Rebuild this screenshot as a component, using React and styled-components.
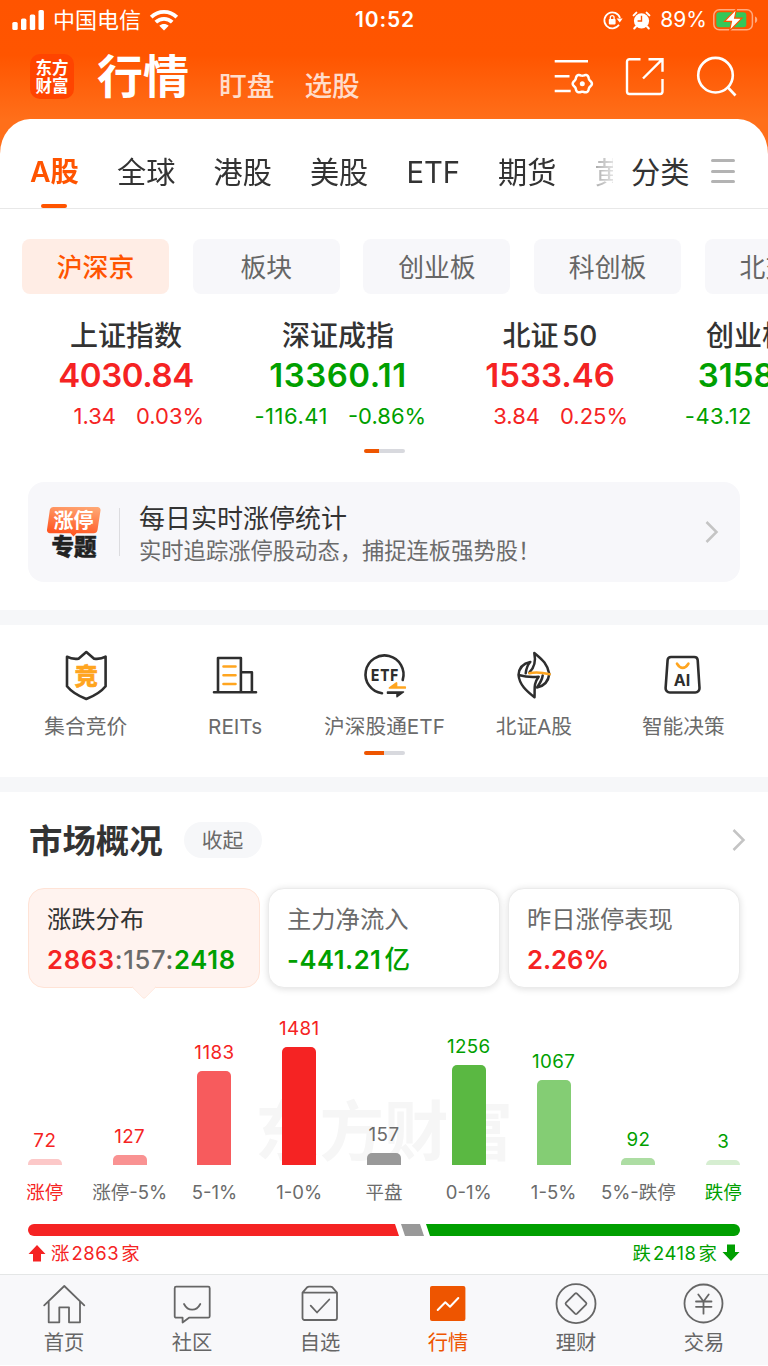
import React, { useState } from 'react'
import styled, { createGlobalStyle } from 'styled-components'

const RED = '#f52323'
const GREEN = '#009f00'
const ORANGE = '#ff5400'
const DARK = '#333333'
const GREY = '#6b6b6b'

const GlobalStyle = createGlobalStyle`
    * { box-sizing: border-box; }
    body {
        margin: 0;
        background: #ffffff;
        color: ${DARK};
        font-family: Inter, "Noto Sans CJK SC", sans-serif;
        overflow: hidden;
    }
    button {
        font: inherit;
        color: inherit;
        border: none;
        background: none;
        padding: 0;
        margin: 0;
    }
    svg { display: block; flex: none; overflow: visible; }
`

const Screen = styled.div`
    width: 768px;
    height: 1366px;
    overflow: hidden;
    display: flex;
    flex-direction: column;
    white-space: nowrap;
`

// header
const Header = styled.header`
    flex: none;
    height: 160px;
    background: linear-gradient(#ff5400 0, #ff5500 55px, #ff6f1a 120px);
    color: #ffffff;
`

const StatusBar = styled.div`
    height: 40px;
    padding: 0 10px 0 12px;
    display: grid;
    grid-template-columns: 1fr auto 1fr;
    align-items: center;
    font-size: 22px;
    line-height: 40px;
`

const StatusSide = styled.div`
    display: flex;
    align-items: center;
    justify-content: ${props => props.$end ? 'flex-end' : 'flex-start'};
    gap: ${props => props.$end ? 9 : 8}px;
`

const BatteryLevel = styled.span`
    font-size: 21px;
    margin-right: -3px;
`

const Clock = styled.div`
    font-weight: 600;
    font-size: 21px;
    letter-spacing: .9px;
`

const TitleBar = styled.div`
    height: 79px;
    padding: 0 30px;
    display: flex;
    align-items: flex-start;
`

const Logo = styled.div`
    width: 44px;
    height: 45px;
    margin-top: 14px;
    padding-top: 5px;
    border-radius: 10px;
    background: #ff4400;
    font-size: 16.5px;
    line-height: 18px;
    font-weight: 700;
    text-align: center;
`

const PageTitle = styled.h1`
    margin: 8px 0 0 23px;
    font-size: 46px;
    line-height: 56px;
    font-weight: 700;
`

const HeaderLink = styled.button`
    margin: 26px 0 0 30px;
    font-size: 27.7px;
    line-height: 40px;
    font-weight: 500;
    color: #ffdccb;
`

const HeaderIcons = styled.div`
    display: flex;
    gap: 30px;
    margin: 16px 0 0 auto;
    svg:last-child { margin-left: -1px; }
`

// white sheet
const Sheet = styled.main`
    flex: 1;
    margin-top: -41px;
    background: #ffffff;
    border-radius: 30px 30px 0 0 / 35px 35px 0 0;
`

const TabBar = styled.nav`
    height: 90px;
    padding: 0 32px 0 30px;
    display: flex;
    align-items: stretch;
    border-bottom: 1px solid #e8e8e8;
`

const TabList = styled.div`
    flex: none;
    width: 583px;
    overflow: hidden;
    display: flex;
    gap: 38.1px;
    mask-image: linear-gradient(to right, #000 95%, rgba(0, 0, 0, .35) 97.5%, rgba(0, 0, 0, .15) 100%);
`

const Tab = styled.button`
    display: flex;
    flex-direction: column;
    align-items: center;
    justify-content: space-between;
    font-size: ${props => props.$active ? 28.3 : 29.2}px;
    font-weight: ${props => props.$active ? 600 : 400};
    color: ${props => props.$active ? ORANGE : DARK};
    line-height: 107px;
    height: 89px;
    &:after {
        content: '';
        width: 26px;
        height: 4px;
        margin-top: -22px;
        border-radius: 2px;
        background: ${props => props.$active ? ORANGE : 'transparent'};
    }
`

const Category = styled.div`
    margin-left: 18px;
    font-size: 29.2px;
    line-height: 107px;
`

const MenuLines = styled.div`
    margin: 40px 0 0 22px;
    width: 24px;
    height: 24px;
    display: flex;
    flex-direction: column;
    justify-content: space-between;
    i {
        height: 3px;
        border-radius: 2px;
        background: #b3b3b3;
    }
`

const Chips = styled.div`
    display: flex;
    gap: 23.7px;
    padding: 30px 0 0 22px;
    overflow: hidden;
`

const Chip = styled.button`
    flex: none;
    width: 147px;
    height: 55px;
    border-radius: 8px;
    font-size: 25.8px;
    line-height: 58px;
    font-weight: ${props => props.$active ? 500 : 400};
    color: ${props => props.$active ? ORANGE : '#666666'};
    background: ${props => props.$active ? '#ffede5' : '#f7f7fa'};
`

const IndexRow = styled.div`
    display: flex;
    height: 155px;
    padding: 22px 0 0 20px;
    overflow: hidden;
`

const IndexCell = styled.div`
    flex: none;
    width: 212px;
    text-align: center;
    color: ${props => props.$up ? RED : GREEN};
`

const IndexName = styled.div`
    font-size: 28px;
    line-height: 40px;
    font-weight: 500;
    color: ${DARK};
    word-spacing: -4px;
`

const IndexValue = styled.div`
    font-size: 33px;
    line-height: 39px;
    font-weight: 600;
    letter-spacing: ${props => props.$spacing || 0}px;
`

const IndexChange = styled.div`
    display: grid;
    grid-template-columns: 1fr 1fr;
    gap: 20px;
    font-size: 22px;
    line-height: 42px;
    span:first-child {
        text-align: right;
        letter-spacing: ${props => props.$up ? 0 : .5}px;
    }
    span:last-child { text-align: left; }
`

const Pager = styled.div`
    width: 41px;
    height: 4px;
    margin: 0 auto;
    border-radius: 2px;
    background: linear-gradient(to right, #ee5500 ${props => props.$fill}, #d8d9de ${props => props.$fill});
`

const Banner = styled.section`
    margin: 29px 28px 28px;
    height: 100px;
    padding: 0 21px 0 18px;
    border-radius: 16px;
    background: #f7f7fa;
    display: flex;
    align-items: center;
`

const BannerRule = styled.div`
    width: 1px;
    height: 48px;
    margin: 0 19px 0 17px;
    background: #dcdcdf;
`

const BannerText = styled.div`
    flex: 1;
    display: flex;
    flex-direction: column;
    padding-top: 3px;
    strong {
        font-size: 26px;
        line-height: 34px;
        font-weight: 400;
    }
    span {
        font-size: 22.3px;
        line-height: 30px;
        color: ${GREY};
    }
`

const Strip = styled.div`
    height: 15px;
    background: #f6f7f9;
`

const Shortcuts = styled.section`
    height: 152px;
    padding: 25px 10px 0 11px;
`

const ShortcutGrid = styled.div`
    display: grid;
    grid-template-columns: repeat(5, 1fr);
    margin-bottom: 9px;
`

const Shortcut = styled.button`
    display: flex;
    flex-direction: column;
    align-items: center;
    font-size: 20.7px;
    line-height: 30px;
    color: ${GREY};
    svg { margin-bottom: 10px; }
`

const Overview = styled.section`
    padding: 0 28px;
`

const SectionHead = styled.div`
    height: 96px;
    display: flex;
    align-items: center;
    h2 {
        margin: 2px 21px 0 1px;
        font-size: 33.4px;
        line-height: 48px;
        font-weight: 700;
    }
    svg { margin: 0 -6px 0 auto; }
`

const Pill = styled.button`
    width: 78px;
    height: 36px;
    border-radius: 18px;
    background: #f6f7f9;
    color: ${GREY};
    font-size: 20.8px;
    line-height: 37px;
`

const Cards = styled.div`
    display: grid;
    grid-template-columns: repeat(3, 1fr);
    gap: 8px;
`

const Card = styled.button`
    position: relative;
    height: 100px;
    padding: 12px 0 0 18px;
    display: flex;
    flex-direction: column;
    text-align: left;
    border-radius: 16px;
    border: 1px solid ${props => props.$active ? '#ffe3d6' : '#ebebeb'};
    background: ${props => props.$active ? '#fff3ef' : '#ffffff'};
    box-shadow: ${props => props.$active ? 'none' : '0 1px 7px rgba(0, 0, 0, .13)'};
    &:after {
        content: '';
        display: ${props => props.$active ? 'block' : 'none'};
        position: absolute;
        left: 50%;
        bottom: -9px;
        width: 17px;
        height: 17px;
        background: #fff3ef;
        border: 1px solid #ffe9df;
        border-width: 0 1px 1px 0;
        border-radius: 3px;
        transform: translateX(-50%) rotate(45deg);
    }
`

const CardTitle = styled.div`
    font-size: 24.3px;
    line-height: 36px;
    color: ${props => props.$active ? DARK : GREY};
`

const CardValue = styled.div`
    margin-top: 2px;
    font-size: 25.6px;
    line-height: 42px;
    font-weight: 600;
    letter-spacing: ${props => props.$spacing || 0}px;
    color: ${props => props.$color};
`

const Part = styled.span`
    color: ${props => props.$color};
    font-weight: ${props => props.$weight || 600};
`

const Unit = styled.span`
    margin-left: 3px;
    font-weight: 500;
`

const Chart = styled.div`
    position: relative;
    height: 219px;
    margin: 0 -26px;
    display: grid;
    grid-template-columns: repeat(9, 84.8px);
    justify-content: center;
    align-items: end;
`

const Watermark = styled.div`
    position: absolute;
    left: 253px;
    top: 99px;
    font-size: 64.5px;
    line-height: 90px;
    font-weight: 700;
    color: #f6f6f6;
`

const BarColumn = styled.div`
    position: relative;
    display: flex;
    flex-direction: column;
    align-items: center;
`

const BarValue = styled.div`
    font-size: 18.8px;
    line-height: 24px;
    letter-spacing: .4px;
    margin-bottom: 6px;
    color: ${props => props.$color};
`

const Bar = styled.div`
    width: 34px;
    border-radius: 5px 5px 0 0;
    background: ${props => props.$color};
`

const BarLabel = styled.div`
    margin-top: 13px;
    height: 29px;
    font-size: 18.5px;
    line-height: 29px;
    color: ${props => props.$color || GREY};
`

const RatioBar = styled.div`
    display: grid;
    grid-template-columns: 371px 23px 1fr;
    gap: 2px;
    height: 12px;
    margin-top: 17px;
`

const RatioUp = styled.div`
    background: ${RED};
    border-radius: 6px 0 0 6px;
    clip-path: polygon(0 0, calc(100% - 4px) 0, 100% 100%, 0 100%);
`

const RatioFlat = styled.div`
    background: #999999;
    clip-path: polygon(0 0, calc(100% - 4px) 0, 100% 100%, 4px 100%);
`

const RatioDown = styled.div`
    background: ${GREEN};
    border-radius: 0 6px 6px 0;
    clip-path: polygon(0 0, 100% 0, 100% 100%, 4px 100%);
`

const RatioLegend = styled.div`
    display: flex;
    justify-content: space-between;
    font-size: 18.4px;
    line-height: 34px;
`

const LegendItem = styled.div`
    display: flex;
    align-items: center;
    gap: 5px;
    color: ${props => props.$color};
    b {
        font-weight: 400;
        margin: 0 2px;
        letter-spacing: .6px;
    }
`

const BottomNav = styled.nav`
    flex: none;
    height: 91px;
    margin-bottom: 1px;
    border-top: 1px solid #e4e6e6;
    background: #f8f8fa;
    display: grid;
    grid-template-columns: repeat(6, 1fr);
`

const NavItem = styled.button`
    display: flex;
    flex-direction: column;
    align-items: center;
    padding-top: 7px;
    font-size: 20.3px;
    line-height: 30px;
    color: ${props => props.$active ? '#ee5500' : '#666666'};
    svg { margin-bottom: 2px; }
`

// icons
const SignalIcon = () => (
    <svg width="33" height="20" viewBox="0 0 33 20" fill="#fff">
        <rect x="0.3" y="12" width="5.4" height="8" rx="1.6" />
        <rect x="9" y="8.6" width="5.4" height="11.4" rx="1.6" />
        <rect x="17.8" y="4.4" width="5.4" height="15.6" rx="1.6" />
        <rect x="26.5" y="0" width="5.4" height="20" rx="1.6" />
    </svg>
)

const WifiIcon = () => (
    <svg width="28" height="21" viewBox="-1 0 28 21" fill="none" stroke="#fff" strokeWidth="3.8">
        <path d="M1.2 7.2C8.4 .2 19.6 .2 26.8 7.2" />
        <path d="M5.8 12.2c4.7-4.4 11.7-4.4 16.4 0" />
        <path d="M9.3 15.8c2.7-2.5 6.7-2.5 9.4 0L14 20.6z" fill="#fff" stroke="none" />
    </svg>
)

const RotationLockIcon = () => (
    <svg width="20" height="20" viewBox="0 0 20 20" fill="none" stroke="#fff" strokeWidth="1.7">
        <path d="M16 14.8A8 8 0 1 1 17 8" />
        <path d="M13.6 8.4h6l-2.8 4z" fill="#fff" stroke="none" />
        <rect x="5.8" y="9" width="6.8" height="5.4" rx=".8" fill="#fff" stroke="none" />
        <path d="M7.3 9.4V7.6a1.9 1.9 0 0 1 3.8 0v1.8" strokeWidth="1.3" />
    </svg>
)

const AlarmIcon = () => (
    <svg width="19" height="19" viewBox="0 0 19 19">
        <circle cx="9.5" cy="9.8" r="7.6" fill="#fff" />
        <path d="M1.6 4.4L4.4 1.6M17.4 4.4L14.6 1.6M4 15.5l-1.8 2M15 15.5l1.8 2" stroke="#fff" strokeWidth="2" fill="none" strokeLinecap="round" />
        <path d="M9.5 4.8v5.2H5.6" stroke={ORANGE} strokeWidth="1.4" fill="none" />
    </svg>
)

const BatteryIcon = () => (
    <svg width="45" height="22" viewBox="0 0 45 22">
        <rect x=".8" y=".8" width="38.6" height="20" rx="5.5" fill="none" stroke="#ffaa80" strokeWidth="1.5" />
        <path d="M42 7.5c3 1 3 5.6 0 6.6z" fill="#ffaa80" />
        <rect x="3.3" y="3.3" width="30" height="15" rx="3" fill="#34c759" />
        <path d="M23.5-.2L11.5 12.3h7l-2 9.5L29 9.2h-7.4z" fill="#fff" stroke={ORANGE} strokeWidth="1.2" />
    </svg>
)

// six-lobed outline around the settings dot
const gearPath = Array.from({ length: 72 }, (_, i) => {
    const a = i * Math.PI / 36
    const r = 8.8 + 0.8 * Math.cos(a * 6)
    return `${i ? 'L' : 'M'}${(28.3 + r * Math.cos(a)).toFixed(2)} ${(26.7 + r * Math.sin(a)).toFixed(2)}`
}).join('') + 'Z'

const FilterIcon = () => (
    <svg width="42" height="42" viewBox="0 0 42 42" fill="none" stroke="#fff" strokeWidth="2.5">
        <path d="M.7 5.3H34M.7 20.3h14.8M.7 35h16" />
        <path d={gearPath} transform="translate(0 1)" />
        <circle cx="28.3" cy="27.7" r="2.5" fill="#fff" stroke="none" />
    </svg>
)

const ShareIcon = () => (
    <svg width="42" height="42" viewBox="0.5 0 42 42" fill="none" stroke="#fff" strokeWidth="2.4">
        <path d="M15 3.2H4a2.500 2.500 0 0 0-2.500 2.500v29.800A2.500 2.500 0 0 0 4 38h30.500a2.500 2.500 0 0 0 2.500-2.500V23" />
        <path d="M23 3.2h14V15.800M37 3.200L17.500 22.500" />
    </svg>
)

const SearchIcon = () => (
    <svg width="41" height="42" viewBox="0 0 41 42" fill="none" stroke="#fff" strokeWidth="2.6">
        <circle cx="18.5" cy="19.2" r="17.3" />
        <path d="M30.5 31l8 8.5" />
    </svg>
)

const ChevronIcon = () => (
    <svg width="14" height="24" viewBox="0 0 14 24" fill="none" stroke="#c4c4c4" strokeWidth="2.5">
        <path d="M1.5 2l10 10-10 10" />
    </svg>
)

const LimitUpBadge = () => (
    <svg width="56" height="54" viewBox="0 0 56 54">
        <defs>
            <linearGradient id="badge" x1="1" y1="0" x2=".7" y2="1">
                <stop offset="0" stopColor="#ffab78" />
                <stop offset="1" stopColor="#ff5722" />
            </linearGradient>
        </defs>
        <path d="M7.5 2H51.5a3 3 0 0 1 3 3.4L51.5 25a4 4 0 0 1-4 3.2H30.500L27.500 31.500 24.500 28.200H4a3 3 0 0 1-3-3.400L3.800 5A4 4 0 0 1 7.500 2z" fill="url(#badge)" />
        <text x="27.5" y="22.5" fontSize="20" fontWeight="700" fill="#fff" textAnchor="middle">涨停</text>
        <text x="28" y="50" fontSize="22.5" fontWeight="900" fill="#222" stroke="#222" strokeWidth=".5" textAnchor="middle">专题</text>
    </svg>
)

const ShortcutSvg = ({ children }) => (
    <svg width="52" height="52" viewBox="0 0 52 52" fill="none" stroke="#2e2e2e" strokeWidth="2.6" strokeLinejoin="round" strokeLinecap="round">
        {children}
    </svg>
)

const AuctionIcon = () => (
    <ShortcutSvg>
        <path d="M7 6.700c4 2.200 7.500 2.500 11.500 2L26.300 2l7.800 6.700c4 .5 7.500.2 11.500-2v29.500c-4 5-11 9.500-19.300 12.800C18 45.700 11 41.200 7 36.200z" />
        <text x="26.3" y="34.5" fontSize="23.5" fontWeight="900" fill="#ffa51f" stroke="#ffa51f" strokeWidth=".5" textAnchor="middle">竞</text>
    </ShortcutSvg>
)

const ReitsIcon = () => (
    <ShortcutSvg>
        <path d="M5 42.300h42M9 42V8h22.900v34M31.900 22.300h11V42" />
        <path d="M14.500 16.500h12M14.500 25.300h12M14.500 34h12" stroke="#ffa51f" />
    </ShortcutSvg>
)

const EtfIcon = () => (
    <ShortcutSvg>
        <path d="M24 43.3A19 19 0 1 1 44.700 30" />
        <text x="13" y="30.500" fontSize="15.500" fontWeight="800" fill="#2e2e2e" stroke="none" letterSpacing="1" textLength="28" lengthAdjust="spacingAndGlyphs">ETF</text>
        <path d="M31.500 38L38.500 33v4H47.200v1H31.500z" fill="#ffa51f" stroke="#ffa51f" strokeWidth="1.700" />
        <path d="M29.500 42H45.500L39 46.700V43.300H29.500z" fill="#2e2e2e" strokeWidth="1.500" />
    </ShortcutSvg>
)

const BeijingIcon = () => (
    <ShortcutSvg>
        <path d="M21.300 22.700C26 18 28 11 26.300 3c7 6 13 10 15 21-1 8-5 12-12.300 13.500 2.500-3.500 5-7 5.700-12" strokeWidth="2.500" />
        <path d="M17.700 23.300c.5-4.500 1.500-8 4.600-11.300C15 13.500 11 18 10.500 25c1 10 8 16 16 22.300.6-8-1.500-13.300 4.200-20.600-6 .8-13 .3-20.200-1.700" strokeWidth="2.500" />
        <path d="M21.300 23.300c7-1.500 12-1 20.400 1" stroke="#ffa51f" strokeWidth="2.500" />
    </ShortcutSvg>
)

const AiIcon = () => (
    <ShortcutSvg>
        <path d="M14 7h23.200a3.500 3.500 0 0 1 3.500 3.200L42.500 38a4.200 4.200 0 0 1-4.200 4.500H12.800A4.200 4.200 0 0 1 8.600 38l2-27.800A3.500 3.500 0 0 1 14 7z" />
        <path d="M20 13.700c3.500 5.600 7.900 5.600 11.400 0" stroke="#ffa51f" />
        <text x="25" y="36" fontSize="16" fontWeight="700" fill="#2e2e2e" stroke="none" textAnchor="middle">AI</text>
    </ShortcutSvg>
)

const NavSvg = ({ children }) => (
    <svg width="44" height="44" viewBox="0 0 44 44" fill="none" stroke="#666" strokeWidth="1.8" strokeLinejoin="round" strokeLinecap="round">
        {children}
    </svg>
)

const HomeIcon = () => (
    <NavSvg>
        <path d="M2.200 23.300L22.300 4l20 19.300M6.700 19.500v20.800h10.600v-15H27v15h11V19.500" />
    </NavSvg>
)

const CommunityIcon = () => (
    <NavSvg>
        <path d="M6.200 4.700h32a1.500 1.500 0 0 1 1.500 1.500v28a1.500 1.500 0 0 1-1.500 1.500H19L12.600 40.500V35.700H6.200a1.500 1.500 0 0 1-1.500-1.500v-28a1.500 1.500 0 0 1 1.500-1.500z" />
        <path d="M14 22c4 7.600 12.300 7.600 16.300 0" />
    </NavSvg>
)

const WatchlistIcon = () => (
    <NavSvg>
        <path d="M4.500 10.700H39V36a2 2 0 0 1-2 2H6.500a2 2 0 0 1-2-2zL9.300 5.200 11 4.700H32.500l1.700.5L39 10.700" />
        <path d="M12.700 23.700l6.300 6.800 12.300-13" />
    </NavSvg>
)

const MarketIcon = () => (
    <NavSvg>
        <rect x="4" y="4" width="35.4" height="35" rx="2" fill="#ee5500" stroke="none" />
        <path d="M11.700 28l7.600-7.700 4.700 4.400 8.300-8.700" stroke="#fff" strokeWidth="2" />
    </NavSvg>
)

const FinanceIcon = () => (
    <NavSvg>
        <circle cx="22" cy="21.7" r="19.5" />
        <path d="M21 11.700a1.500 1.500 0 0 1 2 0l9 9a1.500 1.500 0 0 1 0 2l-9 9a1.500 1.500 0 0 1-2 0l-9-9a1.500 1.500 0 0 1 0-2z" />
    </NavSvg>
)

const TradeIcon = () => (
    <NavSvg>
        <circle cx="21.5" cy="21.5" r="19" />
        <path d="M16.300 12.500l5.200 7 5.200-7M21.500 19.500V31.700M14 19.500h15.500M14 24.800h15.500" />
    </NavSvg>
)

const tabs = ['A股', '全球', '港股', '美股', 'ETF', '期货', '黄金']
const chips = ['沪深京', '板块', '创业板', '科创板', '北交所']

const indices = [
    { name: '上证指数', value: '4030.84', change: '1.34', percent: '0.03%', up: true, spacing: -.4 },
    { name: '深证成指', value: '13360.11', change: '-116.41', percent: '-0.86%', spacing: .5 },
    { name: '北证 50', value: '1533.46', change: '3.84', percent: '0.25%', up: true },
    { name: '创业板指', value: '3158.98', change: '-43.12', percent: '-1.35%' },
]

const shortcuts = [
    { label: '集合竞价', Icon: AuctionIcon },
    { label: 'REITs', Icon: ReitsIcon },
    { label: '沪深股通ETF', Icon: EtfIcon },
    { label: '北证A股', Icon: BeijingIcon },
    { label: '智能决策', Icon: AiIcon },
]

const distribution = [
    { label: '涨停', count: 72, bar: '#fcc8c8', text: RED, labelColor: RED },
    { label: '涨停-5%', count: 127, bar: '#f99292', text: RED },
    { label: '5-1%', count: 1183, bar: '#f75b5d', text: RED },
    { label: '1-0%', count: 1481, bar: '#f52323', text: RED },
    { label: '平盘', count: 157, bar: '#999999', text: GREY },
    { label: '0-1%', count: 1256, bar: '#5ab842', text: GREEN },
    { label: '1-5%', count: 1067, bar: '#84cd74', text: GREEN },
    { label: '5%-跌停', count: 92, bar: '#addda3', text: GREEN },
    { label: '跌停', count: 3, bar: '#d6eed1', text: GREEN, labelColor: GREEN },
]

const navItems = [
    { label: '首页', Icon: HomeIcon },
    { label: '社区', Icon: CommunityIcon },
    { label: '自选', Icon: WatchlistIcon },
    { label: '行情', Icon: MarketIcon },
    { label: '理财', Icon: FinanceIcon },
    { label: '交易', Icon: TradeIcon },
]

const barHeight = (count) => Math.max(5, count * 118 / 1481)

function Distribution() {
    return (
        <>
            <Chart>
                <Watermark>东方财富</Watermark>
                {distribution.map(item => (
                    <BarColumn key={item.label}>
                        <BarValue $color={item.text}>{item.count}</BarValue>
                        <Bar $color={item.bar} style={{ height: barHeight(item.count) }} />
                        <BarLabel $color={item.labelColor}>{item.label}</BarLabel>
                    </BarColumn>
                ))}
            </Chart>
            <RatioBar>
                <RatioUp />
                <RatioFlat />
                <RatioDown />
            </RatioBar>
            <RatioLegend>
                <LegendItem $color={RED}>
                    <svg width="18" height="18" viewBox="0 0 18 18" fill={RED}><path d="M9 1l8.500 9h-4.500V17.500H5V10H.5z" /></svg>
                    <span>涨<b>2863</b>家</span>
                </LegendItem>
                <LegendItem $color={GREEN}>
                    <span>跌<b>2418</b>家</span>
                    <svg width="18" height="18" viewBox="0 0 18 18" fill={GREEN}><path d="M9 17l8.500-9h-4.500V.5H5V8H.5z" /></svg>
                </LegendItem>
            </RatioLegend>
        </>
    )
}

export default function App() {
    const [ tab, setTab ] = useState('A股')
    const [ chip, setChip ] = useState('沪深京')

    return (
        <Screen>
            <GlobalStyle />
            <Header>
                <StatusBar>
                    <StatusSide>
                        <SignalIcon />
                        <span>中国电信</span>
                        <WifiIcon />
                    </StatusSide>
                    <Clock>10:52</Clock>
                    <StatusSide $end>
                        <RotationLockIcon />
                        <AlarmIcon />
                        <BatteryLevel>89%</BatteryLevel>
                        <BatteryIcon />
                    </StatusSide>
                </StatusBar>
                <TitleBar>
                    <Logo>东方<br />财富</Logo>
                    <PageTitle>行情</PageTitle>
                    <HeaderLink>盯盘</HeaderLink>
                    <HeaderLink>选股</HeaderLink>
                    <HeaderIcons>
                        <FilterIcon />
                        <ShareIcon />
                        <SearchIcon />
                    </HeaderIcons>
                </TitleBar>
            </Header>
            <Sheet>
                <TabBar>
                    <TabList>
                        {tabs.map(name => (
                            <Tab key={name} $active={name === tab} onClick={() => setTab(name)}>{name}</Tab>
                        ))}
                    </TabList>
                    <Category>分类</Category>
                    <MenuLines><i /><i /><i /></MenuLines>
                </TabBar>
                <Chips>
                    {chips.map(name => (
                        <Chip key={name} $active={name === chip} onClick={() => setChip(name)}>{name}</Chip>
                    ))}
                </Chips>
                <IndexRow>
                    {indices.map(item => (
                        <IndexCell key={item.name} $up={item.up}>
                            <IndexName>{item.name}</IndexName>
                            <IndexValue $spacing={item.spacing}>{item.value}</IndexValue>
                            <IndexChange $up={item.up}>
                                <span>{item.change}</span>
                                <span>{item.percent}</span>
                            </IndexChange>
                        </IndexCell>
                    ))}
                </IndexRow>
                <Pager $fill="36%" />
                <Banner>
                    <LimitUpBadge />
                    <BannerRule />
                    <BannerText>
                        <strong>每日实时涨停统计</strong>
                        <span>实时追踪涨停股动态，捕捉连板强势股！</span>
                    </BannerText>
                    <ChevronIcon />
                </Banner>
                <Strip />
                <Shortcuts>
                    <ShortcutGrid>
                        {shortcuts.map(({ label, Icon }) => (
                            <Shortcut key={label}><Icon />{label}</Shortcut>
                        ))}
                    </ShortcutGrid>
                    <Pager $fill="50%" />
                </Shortcuts>
                <Strip />
                <Overview>
                    <SectionHead>
                        <h2>市场概况</h2>
                        <Pill>收起</Pill>
                        <ChevronIcon />
                    </SectionHead>
                    <Cards>
                        <Card $active>
                            <CardTitle $active>涨跌分布</CardTitle>
                            <CardValue $color={GREY} $spacing={0.7}>
                                <Part $color={RED}>2863</Part>
                                <Part $color={GREY} $weight={500}>:157:</Part>
                                <Part $color={GREEN}>2418</Part>
                            </CardValue>
                        </Card>
                        <Card>
                            <CardTitle>主力净流入</CardTitle>
                            <CardValue $color={GREEN} $spacing={0.5}>-441.21<Unit>亿</Unit></CardValue>
                        </Card>
                        <Card>
                            <CardTitle>昨日涨停表现</CardTitle>
                            <CardValue $color={RED}>2.26%</CardValue>
                        </Card>
                    </Cards>
                    <Distribution />
                </Overview>
            </Sheet>
            <BottomNav>
                {navItems.map(({ label, Icon }) => (
                    <NavItem key={label} $active={label === '行情'}><Icon />{label}</NavItem>
                ))}
            </BottomNav>
        </Screen>
    )
}
